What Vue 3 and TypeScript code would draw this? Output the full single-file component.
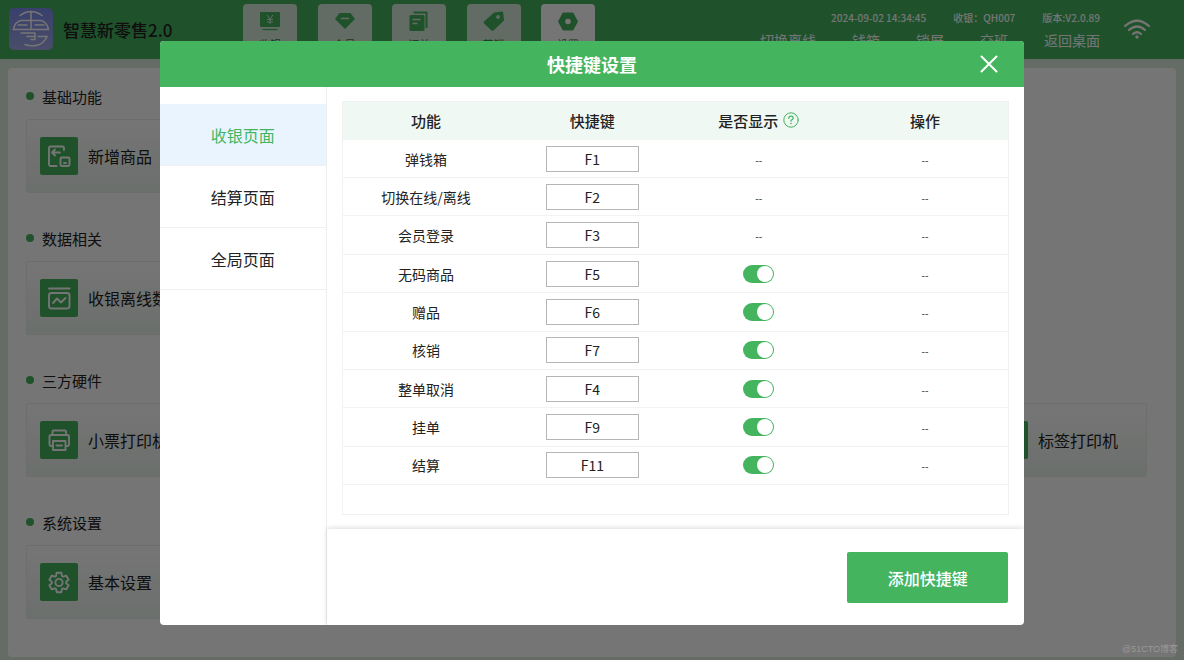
<script setup lang="ts">
import { ref } from 'vue'

interface ShortcutRow {
  name: string
  key: string
  shown?: boolean
}

const navTabs = [
  { id: 'cash', label: '收银' },
  { id: 'member', label: '会员' },
  { id: 'order', label: '订单' },
  { id: 'promo', label: '营销' },
  { id: 'setting', label: '设置' },
]

const actions = ['切换离线', '钱箱', '锁屏', '交班', '返回桌面']

const sections = [
  { title: '基础功能', cards: [{ icon: 'goods', label: '新增商品' }] },
  { title: '数据相关', cards: [{ icon: 'data', label: '收银离线数据' }] },
  {
    title: '三方硬件',
    cards: [
      { icon: 'printer', label: '小票打印机' },
      { icon: 'label', label: '标签打印机', last: true },
    ],
  },
  { title: '系统设置', cards: [{ icon: 'gear', label: '基本设置' }] },
] as { title: string; cards: { icon: string; label: string; last?: boolean }[] }[]

const pages = ['收银页面', '结算页面', '全局页面']
const activePage = ref('收银页面')

const rows = ref<ShortcutRow[]>([
  { name: '弹钱箱', key: 'F1' },
  { name: '切换在线/离线', key: 'F2' },
  { name: '会员登录', key: 'F3' },
  { name: '无码商品', key: 'F5', shown: true },
  { name: '赠品', key: 'F6', shown: true },
  { name: '核销', key: 'F7', shown: true },
  { name: '整单取消', key: 'F4', shown: true },
  { name: '挂单', key: 'F9', shown: true },
  { name: '结算', key: 'F11', shown: true },
])
</script>

<template>
  <div class="app">
    <header class="topbar">
      <svg class="logo" viewBox="0 0 44 42" aria-hidden="true">
        <defs>
          <linearGradient id="logo-fill" x1="0" y1="0" x2="0" y2="1">
            <stop offset="0" stop-color="#7c8cec" />
            <stop offset="1" stop-color="#a2a9e6" />
          </linearGradient>
        </defs>
        <rect width="44" height="42" rx="5" fill="url(#logo-fill)" />
        <g fill="none" stroke="#fff" stroke-width="1.500" stroke-linecap="round">
          <path d="M11 7.500Q22-.5 33 7.500M22 4V21.500" />
          <path d="M4.500 21.500Q5.500 14 12 12.500H32Q38 14 39.500 21.500" />
          <path d="M9 17H18M26 17H35M4.500 21.500H39.500" />
          <path d="M12 25H26M18 28.500H26M26 25V31.500H22M29 28.500H38Q35 36 27 37.500Q21 38.500 16 36.500" />
        </g>
      </svg>
      <h1 class="brand">智慧新零售2.0</h1>
      <nav class="tabs">
        <button
          v-for="tab in navTabs"
          :key="tab.id"
          type="button"
          class="tab"
          :class="{ current: tab.id === 'setting' }"
        >
          <svg viewBox="0 0 22 22" class="tab-icon" aria-hidden="true">
            <g v-if="tab.id === 'cash'">
              <rect x="1" y="2" width="20" height="15" rx="1" fill="#44b45f" />
              <path d="M3.500 19.500H18.500" stroke="#44b45f" stroke-width="1.300" />
              <path d="M8 5L11 9L14 5M11 9V14M8 9.500H14M8 12H14" fill="none" stroke="#d5ecda" stroke-width="1" />
            </g>
            <g v-else-if="tab.id === 'member'">
              <path d="M5.500 3H16.500L21 9L11 19L1 9Z" fill="#44b45f" />
              <path d="M7.500 8.500H14.500" stroke="#d5ecda" stroke-width="1.500" stroke-linecap="round" />
            </g>
            <g v-else-if="tab.id === 'order'">
              <path d="M5.500 2.500H18.500V18" fill="none" stroke="#44b45f" stroke-width="2" stroke-linejoin="round" />
              <rect x="1.500" y="5" width="15" height="16" rx="1.500" fill="#44b45f" />
              <path d="M4.500 9.500H12.500M4.500 13.500H9.500" stroke="#d5ecda" stroke-width="1.500" />
            </g>
            <g v-else-if="tab.id === 'promo'">
              <path d="M11 2.500L19 1.500Q20 1.500 20.200 2.500L21 10.500L10.500 20.500Q9.500 21.200 8.500 20.500L1 13.500Q.5 12.500 1 11.500Z" fill="#44b45f" />
              <circle cx="15" cy="7" r="1.900" fill="#d5ecda" />
            </g>
            <g v-else>
              <path d="M6.500 2.500H15.500Q16.200 2.500 16.600 3.200L21 11.500L16.600 19.800Q16.200 20.500 15.500 20.500H6.500Q5.800 20.500 5.400 19.800L1 11.500L5.400 3.200Q5.800 2.500 6.500 2.500Z" fill="#44b45f" />
              <circle cx="11" cy="11.500" r="2.800" fill="#fff" />
            </g>
          </svg>
          <span>{{ tab.label }}</span>
        </button>
      </nav>
      <div class="status">
        <div class="status-line">
          <span>2024-09-02 14:34:45</span>
          <span>收银：QH007</span>
          <span>版本:V2.0.89</span>
        </div>
        <div class="actions">
          <button v-for="action in actions" :key="action" type="button">{{ action }}</button>
        </div>
      </div>
      <svg class="wifi" viewBox="0 0 28 22" aria-hidden="true">
        <g fill="none" stroke="#fff" stroke-width="2.200" stroke-linecap="round">
          <path d="M2 8Q14-2.500 26 8M6 12Q14 5 22 12M10 16Q14 12.500 18 16" />
        </g>
        <circle cx="14" cy="19" r="1.700" fill="#fff" />
      </svg>
    </header>

    <main class="panel">
      <section v-for="section in sections" :key="section.title" class="group">
        <h2>{{ section.title }}</h2>
        <div class="cards">
          <button
            v-for="card in section.cards"
            :key="card.label"
            type="button"
            class="card"
            :class="{ last: card.last }"
          >
            <svg viewBox="0 0 38 38" class="card-icon" aria-hidden="true">
              <rect width="38" height="38" rx="2" fill="#44b45f" />
              <g fill="none" stroke="#fff" stroke-width="1.900" stroke-linecap="round" stroke-linejoin="round">
                <g v-if="card.icon === 'goods'">
                  <path d="M16.500 29H10.500Q9 29 9 27.500V11Q9 9.500 10.500 9.500H22.500Q24 9.500 24 11V13M20 15.500H12M15 12.500L12 15.500L15 18.500" />
                  <rect x="20.500" y="20.500" width="9" height="8.500" rx="1.500" />
                  <path d="M24 26H26" />
                </g>
                <g v-else-if="card.icon === 'data'">
                  <path d="M9 9.500H29.500" />
                  <rect x="9" y="14" width="20.500" height="15.500" rx="2.500" />
                  <path d="M13 24L17 19.500L21 23.500L25.500 19" />
                </g>
                <g v-else-if="card.icon === 'gear'">
                  <path d="M16.600 9.800H21.400L21.900 12.900L23.200 13.700L26.200 12.600L28.600 16.700L26.200 18.700V20.300L28.600 22.300L26.200 26.400L23.200 25.300L21.900 26.100L21.400 29.200H16.600L16.100 26.100L14.800 25.300L11.800 26.400L9.400 22.300L11.800 20.300V18.700L9.400 16.700L11.800 12.600L14.800 13.700L16.100 12.900Z" />
                  <circle cx="19" cy="19.500" r="3.600" />
                </g>
                <g v-else>
                  <path d="M12.500 14V10.500Q12.500 9.500 13.500 9.500H25Q26 9.500 26 10.500V14M12.500 25H11Q9.500 25 9.500 23.500V15.500Q9.500 14 11 14H27.500Q29 14 29 15.500V23.500Q29 25 27.500 25H26" />
                  <path d="M13 20H25.500V29H13ZM16.500 24.500H22" />
                </g>
              </g>
            </svg>
            <span>{{ card.label }}</span>
          </button>
        </div>
      </section>
    </main>

    <div class="overlay">
      <div class="dialog" role="dialog" aria-modal="true" aria-labelledby="dialog-title">
        <div class="dialog-head">
          <h2 id="dialog-title">快捷键设置</h2>
          <button type="button" class="close" aria-label="关闭">
            <svg viewBox="0 0 18 18" aria-hidden="true">
              <path d="M1.500 1.500L16.500 16.500M16.500 1.500L1.500 16.500" stroke="#fff" stroke-width="2" stroke-linecap="round" />
            </svg>
          </button>
        </div>
        <div class="dialog-body">
          <nav class="pages">
            <button
              v-for="page in pages"
              :key="page"
              type="button"
              :class="{ active: page === activePage }"
              @click="activePage = page"
            >
              {{ page }}
            </button>
          </nav>
          <div class="content">
            <div class="table-area">
              <div class="table-box">
                <table>
                  <thead>
                    <tr>
                      <th>功能</th>
                      <th>快捷键</th>
                      <th>
                        <span class="with-help">
                          是否显示
                          <svg class="help" viewBox="0 0 16 16" aria-hidden="true">
                            <g fill="none" stroke="#44b45f" stroke-linecap="round">
                              <circle cx="8" cy="8" r="7.200" />
                              <path d="M5.800 6.300Q6 4.200 8 4.200Q10.200 4.200 10.200 6.200Q10.200 7.300 8 8.300V9.300" stroke-width="1.200" />
                            </g>
                            <circle cx="8" cy="11.500" r=".8" fill="#44b45f" />
                          </svg>
                        </span>
                      </th>
                      <th>操作</th>
                    </tr>
                  </thead>
                  <tbody>
                    <tr v-for="row in rows" :key="row.key">
                      <td>{{ row.name }}</td>
                      <td><input v-model="row.key" class="key" type="text" :aria-label="row.name" readonly /></td>
                      <td>
                        <input
                          v-if="row.shown !== undefined"
                          v-model="row.shown"
                          class="switch"
                          type="checkbox"
                          role="switch"
                          :aria-label="row.name"
                        />
                        <span v-else class="none">--</span>
                      </td>
                      <td><span class="none">--</span></td>
                    </tr>
                  </tbody>
                </table>
              </div>
            </div>
            <div class="dialog-foot">
              <button type="button" class="add">添加快捷键</button>
            </div>
          </div>
        </div>
      </div>
      <span class="watermark">@51CTO博客</span>
    </div>
  </div>
</template>

<style>
body {
  margin: 0;
}
</style>

<style scoped>
.app {
  position: relative;
  display: flex;
  flex-direction: column;
  box-sizing: border-box;
  min-height: 100vh;
  overflow: hidden;
  background: #d9ecdd;
  color: #222;
  font-family: "Noto Sans CJK SC", "Noto Sans", sans-serif;
}

button {
  margin: 0;
  padding: 0;
  border: 0;
  background: none;
  color: inherit;
  font: inherit;
  cursor: pointer;
}

h1,
h2 {
  margin: 0;
}

.topbar {
  display: flex;
  align-items: flex-start;
  height: 59px;
  padding: 0 33px 0 9px;
  background: #44b45f;
}

.logo {
  width: 44px;
  height: 42px;
  margin-top: 8px;
}

.brand {
  width: 180px;
  padding-left: 10px;
  box-sizing: border-box;
  font-size: 17px;
  font-weight: 500;
  line-height: 59px;
  white-space: nowrap;
}

.tabs {
  display: flex;
  justify-content: space-between;
  width: 352px;
  margin: 4px 0 0 10px;
}

.tab {
  display: flex;
  flex-direction: column;
  align-items: center;
  gap: 4px;
  width: 54px;
  height: 51px;
  padding-top: 6px;
  border-radius: 4px;
  background: #d5ecda;
  color: #2e7d40;
  font-size: 11px;
  line-height: 16px;
}

.tab.current {
  background: #fff;
}

.tab-icon {
  width: 22px;
  height: 22px;
}

.status {
  display: flex;
  flex-direction: column;
  align-items: flex-end;
  gap: 4px;
  margin-left: auto;
  padding-top: 10px;
  color: #fff;
}

.status-line {
  display: flex;
  gap: 27px;
  font-size: 10px;
  font-weight: 500;
  line-height: 16px;
}

.actions {
  display: flex;
  gap: 36px;
  font-size: 14px;
  line-height: 20px;
}

.wifi {
  width: 28px;
  height: 22px;
  margin: 18px 0 0 23px;
}

.panel {
  flex: 1;
  margin: 9px 8px 3px;
  padding: 17px 29px 0 18px;
  border-radius: 4px;
  background: #fff;
}

.group {
  height: 142px;
}

.group h2 {
  display: flex;
  align-items: center;
  gap: 8px;
  height: 22px;
  font-size: 15px;
  font-weight: 400;
}

.group h2::before {
  width: 8px;
  height: 8px;
  border-radius: 50%;
  background: #44b45f;
  content: "";
}

.cards {
  display: grid;
  grid-template-columns: repeat(6, 1fr);
  gap: 19px;
  margin-top: 12px;
}

.card {
  display: flex;
  align-items: center;
  gap: 10px;
  height: 74px;
  padding-left: 13px;
  border: 1px solid #e9efea;
  border-radius: 2px;
  background: linear-gradient(#fff, #eaf3ec);
  font-size: 16px;
  white-space: nowrap;
}

.card.last {
  grid-column: 6;
}

.card-icon {
  flex: none;
  width: 38px;
  height: 38px;
}

/* The dialog layer covers the whole page */
.overlay {
  position: absolute;
  inset: 0;
  display: flex;
  flex-direction: column;
  align-items: center;
  padding-top: 41px;
  background: rgba(0, 0, 0, 0.54);
}

.dialog {
  width: 73%;
  overflow: hidden;
  border-radius: 4px;
  background: #fff;
  color: #222;
}

.dialog-head {
  display: grid;
  grid-template-columns: 1fr auto 1fr;
  align-items: center;
  height: 46px;
  padding: 0 26px;
  background: #44b45f;
  color: #fff;
}

.dialog-head h2 {
  grid-column: 2;
  font-size: 18px;
  font-weight: 700;
}

.close {
  justify-self: end;
  width: 18px;
  height: 18px;
}

.close svg {
  display: block;
}

.dialog-body {
  display: flex;
}

.pages {
  flex: none;
  width: 166px;
  padding-top: 17px;
  border-right: 1px solid #eee;
}

.pages button {
  display: block;
  box-sizing: border-box;
  width: 100%;
  height: 62px;
  border-bottom: 1px solid #f0f0f0;
  font-size: 16px;
}

.pages .active {
  background: #e9f4fe;
  color: #44b45f;
}

.content {
  flex: 1;
  min-width: 0;
}

.table-area {
  padding: 14px 15px;
}

.table-box {
  padding-bottom: 29px;
  border: 1px solid #f0f2f1;
}

table {
  width: 100%;
  height: 383px;
  border-collapse: collapse;
  table-layout: fixed;
}

th {
  height: 38px;
  padding: 0;
  background: #eff8f3;
  font-size: 15px;
  font-weight: 500;
  line-height: 22px;
}

.with-help {
  display: flex;
  align-items: center;
  justify-content: center;
  gap: 5px;
}

.help {
  width: 16px;
  height: 16px;
  margin-bottom: 2px;
}

td {
  padding: 0;
  border-bottom: 1px solid #f3f3f3;
  font-size: 14px;
  line-height: 20px;
  text-align: center;
}

.key {
  display: block;
  box-sizing: border-box;
  width: 93px;
  height: 26px;
  margin: 0 auto;
  padding: 0;
  border: 1px solid #b5b5b5;
  border-radius: 0;
  background: #fff;
  color: inherit;
  font: inherit;
  text-align: center;
}

.switch {
  display: block;
  width: 31px;
  height: 18px;
  margin: 0 auto;
  border-radius: 9px;
  background: #ccc;
  appearance: none;
}

.switch::before {
  display: block;
  width: 16px;
  height: 16px;
  margin: 1px;
  border-radius: 50%;
  background: #fff;
  content: "";
}

.switch:checked {
  background: #44b45f;
}

.switch:checked::before {
  margin-left: 14px;
}

.none {
  font-size: 10px;
}

.dialog-foot {
  display: flex;
  justify-content: flex-end;
  padding: 23px 16px 22px;
  box-shadow: 0 -1px 5px rgba(0, 0, 0, 0.14);
}

.add {
  width: 161px;
  height: 51px;
  border-radius: 2px;
  background: #44b45f;
  color: #fff;
  font-size: 16px;
  font-weight: 500;
}

.watermark {
  position: absolute;
  right: 6px;
  bottom: 3px;
  color: #999;
  font-family: "Liberation Sans", "Noto Sans CJK SC", sans-serif;
  font-size: 9px;
  line-height: 16px;
}
</style>
